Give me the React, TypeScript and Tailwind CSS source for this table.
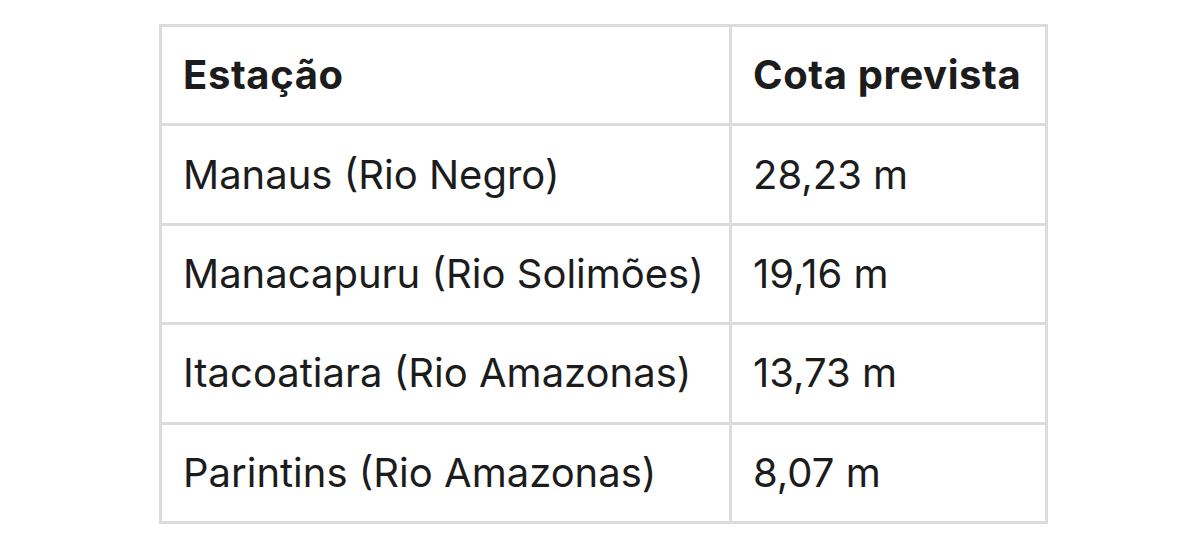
import React from 'react';

const rows = [
  { station: 'Manaus (Rio Negro)', level: '28,23 m' },
  { station: 'Manacapuru (Rio Solimões)', level: '19,16 m' },
  { station: 'Itacoatiara (Rio Amazonas)', level: '13,73 m' },
  { station: 'Parintins (Rio Amazonas)', level: '8,07 m' },
];

export default function App() {
  return (
    <div className="w-[1200px] h-[554px] bg-white pt-[24px] pl-[159px]" style={{ fontFamily: 'Inter, "Noto Sans", sans-serif' }}>
      <table className="w-[889px] table-fixed border-collapse text-[40px] text-[#1c1c1c] whitespace-nowrap">
        <colgroup>
          <col className="w-[570px]" />
          <col />
        </colgroup>
        <thead>
          <tr className="h-[99.4px]">
            <th className="border-[3px] border-[#dcdcdc] px-[21px] text-left font-bold tracking-[0.015em]">Estação</th>
            <th className="border-[3px] border-[#dcdcdc] pl-[21px] pr-0 text-left font-bold tracking-[0.015em]">Cota prevista</th>
          </tr>
        </thead>
        <tbody>
          {rows.map((r) => (
            <tr key={r.station} className="h-[99.4px]">
              <td className="border-[3px] border-[#dcdcdc] px-[21px]">{r.station}</td>
              <td className="border-[3px] border-[#dcdcdc] px-[21px]">{r.level}</td>
            </tr>
          ))}
        </tbody>
      </table>
    </div>
  );
}
